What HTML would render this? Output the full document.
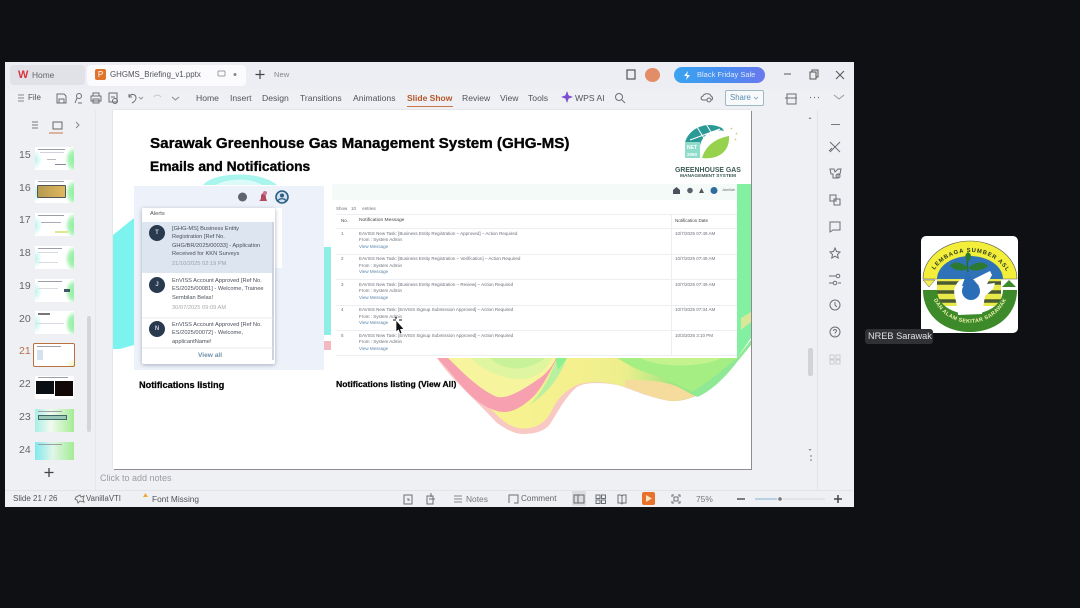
<!DOCTYPE html>
<html><head><meta charset="utf-8"><style>
html,body{margin:0;padding:0;background:#0f1013;width:1080px;height:608px;overflow:hidden}
*{box-sizing:border-box}
body{font-family:"Liberation Sans",sans-serif;position:relative}
#w{position:absolute;inset:0;filter:blur(.35px)}
#w div,#w span.a{position:absolute;white-space:nowrap}
.t{font-size:8.6px;color:#50535a;line-height:12px}
.n{font-size:10.5px;color:#666;line-height:12px;left:19px}
.th{left:35px;width:39px;height:23px;overflow:hidden;background:radial-gradient(ellipse 9px 13px at 100% 55%,#8ef0a0 0,#a8f2b4 55%,rgba(255,255,255,0) 100%),radial-gradient(ellipse 7px 10px at 0 55%,#b8f4ee 0,rgba(255,255,255,0) 100%),#fff}
.th i{position:absolute;display:block;height:1px;background:#9a9fa8}
.ln{font-size:4.5px;color:#6a6f78;line-height:6px}
.lk{font-size:4.5px;color:#5b87ab;line-height:6px}
.al{font-size:5.7px;color:#4a4f58;line-height:8.4px;left:172px}
.av{left:149px;width:16px;height:16px;border-radius:50%;background:#2a3a4e;color:#ccd;font-size:6px;font-weight:bold;text-align:center;line-height:16px}
</style></head><body><div id="w">
<!-- window -->
<div style="left:5px;top:62px;width:849px;height:445px;background:#eff0f4"></div>
<div style="left:5px;top:62px;width:849px;height:27px;background:#eceef3"></div>
<div style="left:10px;top:65px;width:75px;height:20px;background:#e1e2e8;border-radius:4px"></div>
<div style="left:87px;top:65px;width:159px;height:21px;background:#fbfbfd;border-radius:4px"></div>
<div style="left:18px;top:69px;font-size:11px;font-weight:bold;color:#d8353c;line-height:12px">W</div>
<div class="t" style="left:32px;top:69px;color:#666;font-size:8.4px">Home</div>
<div style="left:95px;top:69px;width:11px;height:11px;background:#e0742c;border-radius:2px;color:#fff;font-size:8px;line-height:11px;text-align:center">P</div>
<div class="t" style="left:110px;top:69px;font-size:7.9px">GHGMS_Briefing_v1.pptx</div>
<div class="t" style="left:274px;top:69px;font-size:7.6px;color:#888">New</div>
<div style="left:645px;top:68px;width:15px;height:14px;border-radius:50%;background:#e38c68"></div>
<div style="left:674px;top:67px;width:91px;height:16px;border-radius:8px;background:linear-gradient(90deg,#3aa3f0,#4a8cf0 60%,#6a78ee)"></div>
<div style="left:697px;top:69px;font-size:7.5px;color:#dfeaf9;line-height:12px">Black Friday Sale</div>
<div class="t" style="left:28px;top:92px;font-size:8px">File</div>
<div class="t" style="left:196px;top:92px">Home</div>
<div class="t" style="left:230px;top:92px">Insert</div>
<div class="t" style="left:262px;top:92px">Design</div>
<div class="t" style="left:300px;top:92px">Transitions</div>
<div class="t" style="left:353px;top:92px">Animations</div>
<div class="t" style="left:407px;top:92px;color:#b5562a;font-weight:bold;font-size:8.5px">Slide Show</div>
<div style="left:407px;top:106px;width:46px;height:1px;background:#c9764a"></div>
<div class="t" style="left:462px;top:92px">Review</div>
<div class="t" style="left:500px;top:92px">View</div>
<div class="t" style="left:528px;top:92px">Tools</div>
<div class="t" style="left:575px;top:92px">WPS AI</div>
<div style="left:725px;top:90px;width:39px;height:16px;border:1px solid #9fb8c8;border-radius:2px;background:#f7f9fb"></div>
<div class="t" style="left:730px;top:92px;font-size:7.8px;color:#5b8db0">Share</div>
<!-- panes -->
<div style="left:95px;top:110px;width:1px;height:380px;background:#e6e7ea"></div>
<div style="left:817px;top:110px;width:1px;height:380px;background:#e3e4e8"></div>
<div style="left:96px;top:490px;width:757px;height:1px;background:#e3e4e8"></div>
<div style="left:5px;top:490px;width:91px;height:1px;background:#e3e4e8"></div>
<div style="left:87px;top:316px;width:4px;height:116px;background:#d4d5d9;border-radius:2px"></div>
<div style="left:808px;top:348px;width:5px;height:28px;background:#d2d3d7;border-radius:2px"></div>
<div class="t" style="left:100px;top:472px;color:#9a9ca2;font-size:9px">Click to add notes</div>
<div class="t" style="left:13px;top:493px;font-size:8px">Slide 21 / 26</div>
<div class="t" style="left:86px;top:493px;font-size:7.8px">VanillaVTI</div>
<div class="t" style="left:152px;top:493px;font-size:8.3px">Font Missing</div>
<div class="t" style="left:466px;top:493px;font-size:8.4px;color:#777">Notes</div>
<div class="t" style="left:521px;top:493px;font-size:8.2px;color:#666">Comment</div>
<div style="left:572px;top:491px;width:14px;height:15px;background:#dcdde1"></div>
<div style="left:642px;top:492px;width:13px;height:13px;background:#e8722c;border-radius:2px"></div>
<div class="t" style="left:696px;top:493px;font-size:8.4px;color:#777">75%</div>

<!-- thumbnails -->
<div class="n" style="top:149px">15</div><div class="n" style="top:182px">16</div><div class="n" style="top:214px">17</div><div class="n" style="top:247px">18</div><div class="n" style="top:280px">19</div><div class="n" style="top:313px">20</div><div class="n" style="top:345px;color:#b5704a">21</div><div class="n" style="top:378px">22</div><div class="n" style="top:411px">23</div><div class="n" style="top:444px">24</div>
<div class="th" style="top:147px"><i style="left:3px;top:2px;width:27px"></i><i style="left:5px;top:5px;width:24px;background:#cfd2d8"></i><i style="left:12px;top:12px;width:9px;background:#bbb"></i><i style="left:20px;top:17px;width:11px;background:#889"></i></div>
<div class="th" style="top:180px"><i style="left:3px;top:1px;width:26px"></i><div style="left:2px;top:5px;width:29px;height:13px;background:linear-gradient(90deg,#b59a50,#e0b860);border:1px solid #555;border-radius:1px"></div></div>
<div class="th" style="top:213px"><i style="left:3px;top:2px;width:26px"></i><i style="left:6px;top:9px;width:20px;background:#aab"></i><div style="left:20px;top:18px;width:13px;height:2px;background:#dfe88e"></div></div>
<div class="th" style="top:246px"><i style="left:3px;top:2px;width:24px"></i><i style="left:3px;top:6px;width:20px;background:#d8dce2"></i><i style="left:3px;top:16px;width:20px;background:#d8dce2"></i></div>
<div class="th" style="top:279px"><i style="left:3px;top:2px;width:24px"></i><i style="left:3px;top:9px;width:20px;background:#d8dce2"></i><div style="left:29px;top:10px;width:6px;height:3px;background:#456"></div></div>
<div class="th" style="top:311px"><div style="left:3px;top:2px;width:12px;height:2px;background:#777"></div><i style="left:3px;top:12px;width:26px;background:#d8dce2"></i></div>
<div class="th" style="top:343px;left:33px;width:42px;height:24px;border:1.5px solid #b8703e;border-radius:2px;background:radial-gradient(ellipse 8px 8px at 100% 100%,#e8f4b0,rgba(255,255,255,0)),#fff"><i style="left:3px;top:2px;width:24px"></i><div style="left:3px;top:6px;width:6px;height:10px;background:#d5e2ee"></div></div>
<div class="th" style="top:376px;background:#fff"><div style="left:1px;top:5px;width:18px;height:13px;background:#0a0f14"></div><div style="left:20px;top:5px;width:18px;height:15px;background:#120808"></div><i style="left:3px;top:1px;width:30px"></i></div>
<div class="th" style="top:409px;background:linear-gradient(90deg,#a8eee6,#f2faf0 40%,#a4ec94)"><div style="left:3px;top:6px;width:29px;height:5px;background:#9cc8b8;border:1px solid #3f6a6a"></div><i style="left:3px;top:2px;width:24px"></i></div>
<div class="th" style="top:442px;height:18px;background:linear-gradient(90deg,#80e8ee,#e0f6e8 45%,#a4ec94)"><i style="left:3px;top:2px;width:24px"></i></div>

<!-- slide -->
<div style="left:113px;top:110px;width:638px;height:359px;background:#fff;box-shadow:1px 1px 0 #8d8d8d,0 0 1px #bbb"></div>
<svg style="position:absolute;left:0;top:0" width="1080" height="608" viewBox="0 0 1080 608">
<defs>
<linearGradient id="gr" x1="0" y1="0" x2="1" y2="0"><stop offset="0" stop-color="#f6f490"/><stop offset=".45" stop-color="#f4f08e"/><stop offset=".62" stop-color="#ecee8c"/><stop offset=".78" stop-color="#a0e682"/><stop offset="1" stop-color="#7ce888"/></linearGradient>
</defs>
<path d="M113 235 L134 218 L134 345 L120 349 L113 349Z" fill="#7df3f0"/>
<path d="M203 185 C215 171 262 171 277 185 L262 185 C250 178 228 178 216 185Z" fill="#a8f5ee"/>
<path d="M216 185 C228 178 250 178 262 185Z" fill="#dcfbf8"/>
<path d="M324 247 h7 v88 h-7Z" fill="#8eeee6"/><path d="M324 341 h7 v9 h-7Z" fill="#f4b8c0"/>
<path d="M737 184 h14 v130 L751 338 L737 358Z" fill="#82f0a0"/>
<path d="M741 318 L751 312 L751 322 L741 330Z" fill="#d8e898"/>
<!-- wave silhouette -->
<path d="M437 358 C450 378 473 397 497 423 C507 430 515 434 523 434 C535 434 545 431 550 424 C558 412 565 397 577 387 C585 382 600 382 617 385 C630 388 645 397 670 401 C685 402 700 396 717 383 L737 358Z" fill="#f8c8c4"/>
<path d="M445 358 C456 378 480 398 500 418 C510 427 520 430 530 428 C540 426 548 420 553 408 C559 397 568 388 580 384 C595 380 612 383 625 387 C645 394 660 400 672 401 C690 401 705 392 717 383 L737 358Z" fill="url(#gr)"/>
<path d="M625 387 C645 394 660 400 672 401 C680 401 688 399 695 396 L680 388 C665 380 640 380 625 380Z" fill="#f5dc9c"/>
<path d="M437 358 C450 370 462 390 480 403 C490 409 497 412 505 412 C517 411 525 404 533 397 C542 388 550 372 557 358Z" fill="#f7a0b0"/>
<path d="M448 358 C462 372 480 390 497 397 C510 399 525 388 540 378 C548 372 553 365 556 358Z" fill="#f6f59e"/>
<path d="M470 358 C485 372 510 383 530 378 C542 374 548 366 552 358Z" fill="#dff5a0"/>
<path d="M490 358 C505 372 528 372 545 358Z" fill="#c8f29a"/>
<path d="M557 358 L567 358 C560 375 553 388 530 405 C545 388 552 372 557 358Z" fill="#b8f0a0"/>
<path d="M556 358 L567 358 L558 370 C557 366 556 362 556 358Z" fill="#8cf090"/>
<path d="M617 358 L737 358 C725 368 705 385 692 392 C680 386 660 376 645 372 C632 368 625 362 617 358Z" fill="#a4ee84"/>
<path d="M640 358 C660 368 700 368 722 358Z" fill="#c4f28c"/>
<path d="M692 392 C705 385 725 368 737 358 L751 340 L751 345 L737 362 C725 378 710 392 697 397Z" fill="#8ee894"/>
<!-- hub logo -->
<path d="M685 143 C688 129 706 120 722 128 L724 131 C712 128 702 135 700 146 L692 150Z" fill="#2b9a96"/>
<path d="M690 140 L720 129 M697 127 L707 143 M706 124 L713 135" stroke="#fff" stroke-width="1" fill="none"/>
<path d="M702 158 C706 144 718 138 729 136 C730 150 720 160 702 158Z" fill="#96d24e"/>
<rect x="685" y="142" width="15" height="16" fill="#8fdccb"/>
<path d="M731 128l1 1M736 133l1 1M735 139l1 1" stroke="#d9c75a" stroke-width="1.500"/>
<text x="687" y="149" font-size="5" font-family="Liberation Sans" font-weight="bold" fill="#fff">NET</text>
<text x="687" y="156" font-size="4.500" font-family="Liberation Sans" font-weight="bold" fill="#fff">2050</text>
<!-- alert panel -->
<rect x="134" y="186" width="190" height="184" fill="#edf2fa"/>
<rect x="143" y="208" width="139" height="60" fill="#fff"/>
<rect x="142" y="208" width="133" height="156" rx="2" fill="#fff" style="filter:drop-shadow(0 1px 2px #aab)"/>
<rect x="142" y="222" width="131" height="51" fill="#dde6f0"/>
<rect x="272" y="222" width="2" height="138" fill="#cdd3dc"/>
<path d="M142 318H273M142 348H273" stroke="#e7e9ee" stroke-width="1"/>
<circle cx="242.500" cy="197" r="4.500" fill="#5d6470"/>
<path d="M259 201c2-1 2-3 2-5s2-3 3-3 2 2 2 5l1 3z" fill="#b4485e"/><circle cx="265" cy="193" r="2" fill="#c9768a"/>
<circle cx="282" cy="197" r="6" fill="#d4e0ea" stroke="#2a5f85" stroke-width="1.600"/><circle cx="282" cy="195.500" r="2" fill="#2a5f85"/><path d="M278 201c1-3 7-3 8 0" fill="none" stroke="#2a5f85" stroke-width="1.300"/>
<!-- table -->
<rect x="332" y="184" width="405" height="174" fill="#fff"/>
<rect x="332" y="184" width="405" height="16" fill="#f4faf7"/>
<path d="M336 214.500H737M336 228.500H737M336 254.500H737M336 279.500H737M336 305.500H737M336 330.500H737M336 355.500H737M671.500 215V355" stroke="#eceef2" stroke-width="1" fill="none"/>
<path d="M673 190l3.500-3 3.500 3v4h-7z" fill="#4a535d"/><circle cx="690" cy="190.500" r="2.800" fill="#5a6069"/><path d="M699 193l2.500-5 2.500 5z" fill="#555"/><circle cx="714" cy="190.500" r="3.500" fill="#2e6c9c"/>
<!-- cursor -->
<path d="M396 320 L396 332 L398.500 330 L400 334 L402 333 L400.500 329.500 L404 329Z" fill="#111" stroke="#fff" stroke-width=".7"/>
<path d="M393 320h3M399 320h3M396 317v2" stroke="#111" stroke-width="1"/>
<!-- toolbar icons -->
<g fill="none" stroke="#6b6e75" stroke-width="1">
<path d="M18 95h6M18 98h6M18 101h6" stroke="#888"/>
<path d="M57 94h7l2 2v7h-9zM59 99h5v4h-5z"/>
<circle cx="79" cy="96" r="2.500"/><path d="M77 98l-2 5M78 103h4"/>
<path d="M93 96v-3h6v3M91 96h10v5h-10zM93 99h6v4h-6z"/>
<path d="M109 93h8v9h-8zM111 97h4"/><circle cx="115" cy="101" r="2.500"/>
<path d="M129 97c2-4 7-3 7 1 0 2-2 4-4 5M129 94v3h3"/>
<path d="M139 97l2 2 2-2" stroke="#999"/>
<path d="M154 97c1-2 5-3 7 0" stroke="#c8c8cc"/>
<path d="M172 97l3.500 3 3.500-3" stroke="#888"/>
<circle cx="619" cy="97" r="3.500"/><path d="M622 100l3 3"/>
<path d="M703 100c-2 0-3-3 0-4 1-3 7-3 8 0 2 1 2 4 0 4z"/><circle cx="709" cy="100" r="2" fill="#eee"/>
<path d="M754 97l2 2 2-2" stroke="#8fb0c4"/>
<path d="M787 94h9v10h-9zM785 98h12" />
<path d="M810 97.500h1M814 97.500h1M818 97.500h1" stroke-width="1.200"/>
<path d="M834 95l5 4 5-4" stroke="#999"/>
<rect x="627" y="70" width="8" height="9" stroke="#555" stroke-width="1.200"/>
<path d="M784 74h7" stroke="#555"/><path d="M810 72h6v7h-6zM812 72v-2h6v7h-2" stroke="#555"/><path d="M836 71l8 8M844 71l-8 8" stroke="#555"/>
<path d="M32 122h6M32 125h6M32 128h6" stroke="#777"/><rect x="53" y="122" width="9" height="7" stroke="#666"/>
<path d="M49 133h14" stroke="#c9764a"/>
<path d="M76 122l3 3-3 3" stroke="#888"/>
<path d="M831 124.500h9" stroke="#777"/>
<path d="M830 142l10 10M840 142l-10 10M829 151l3-3"/>
<path d="M830 169h4l1 3 3-3h3l-1 5h-2v4h-5v-4h-2z"/><circle cx="838" cy="176" r="2"/>
<path d="M830 195h6v6h-6zM834 199h6v6h-6z"/>
<path d="M830 222h10v8h-7l-3 2z"/>
<path d="M835 248l1.500 3.500 3.500.500-2.500 2.500.7 3.500-3.200-1.800-3.200 1.800.7-3.500-2.500-2.500 3.500-.500z"/>
<path d="M829 276h7M838 283h3M829 283h4"/><circle cx="838" cy="276" r="1.800"/><circle cx="835" cy="283" r="1.800"/>
<circle cx="835" cy="305" r="5"/><path d="M835 302v3l2 2"/>
<circle cx="835" cy="332" r="5"/><path d="M833.500 331c0-2 3-2 3 0 0 1-1.500 1-1.500 2.500M835 335v.5"/>
<path d="M830 355h4v4h-4zM836 355h4v4h-4zM830 360h4v4h-4zM836 360h4v4h-4z" stroke="#ccc"/>
<path d="M404 495h8v9h-8zM408 498v2h2"/><path d="M427 496h6v8h-6zM431 493v4M429 499h6"/>
<path d="M454 496h8M454 499h8M454 502h8" stroke="#888"/>
<path d="M509 502v-7h9v8h-4M509 499v4" /><path d="M574 495h10v8h-10zM578 495v8" stroke="#666"/>
<path d="M596 495h4v3.500h-4zM601.500 495h4v3.500h-4zM596 500h4v3.500h-4zM601.500 500h4v3.500h-4z"/>
<path d="M618 495h3l1 1 1-1h3v8h-3l-1 1-1-1h-3zM622 496v7"/>
<path d="M672 497v-2h2M678 495h2v2M680 501v2h-2M674 503h-2v-2" /><rect x="674" y="497" width="4" height="4"/>
<path d="M737 499h8" stroke="#555" stroke-width="1.500"/><path d="M834 499h8M838 495v8" stroke="#444" stroke-width="1.500"/>
<path d="M755 499h22" stroke="#7fb0d0"/><path d="M783 499h42" stroke="#d8d9dd"/>
<path d="M76 497l4-2 1 2 3-1-1 3 1 3-4-1-2 2-1-3-2-1z" stroke="#777"/>
</g>
<circle cx="780" cy="499" r="1.800" fill="#777"/>
<path d="M646 495v7l6-3.500z" fill="#fbe3c4"/>
<rect x="218" y="71" width="7" height="5" rx="1" fill="none" stroke="#9a9ca2"/><circle cx="235" cy="74.500" r="1.500" fill="#888"/>
<path d="M260 70v9M255.500 74.500h9" stroke="#444" stroke-width="1.200"/>
<path d="M49 468v9M44.500 472.500h9" stroke="#444" stroke-width="1.300"/>
<path d="M567 91l1.600 4.400 4.400 1.600-4.400 1.600-1.600 4.400-1.600-4.400-4.400-1.600 4.400-1.600z" fill="#7d4fd0"/>
<path d="M688 71l-4 5h3l-1 4 4-5h-3z" fill="#fff"/>
<path d="M143 497l2.500-4 2.500 4z" fill="#f1a63a"/>
<path d="M810 117l1.500 2h-3z M810 451l1.500-2h-3z" fill="#888"/><path d="M810 456h2M810 460h2" stroke="#777"/>
<!-- NREB logo -->
<rect x="921" y="236" width="97" height="97" rx="5" fill="#fff"/>
<path d="M923 279 A47 38 0 0 1 1017 279Z" fill="#f2ee3a" stroke="#555" stroke-width=".6"/>
<path d="M937 279 A33 23 0 0 1 1003 279Z" fill="#2f72b8"/>
<rect x="937" y="279" width="64" height="27" fill="#e9e94a"/>
<path d="M937 283h64M937 292h64M937 301h64" stroke="#4a5a33" stroke-width="3.500"/>
<path d="M923 290 L1017 290 C1017 316 995 332 970 332 C945 332 923 316 923 290Z M937 290 C938 322 1002 322 1003 290Z" fill="#3d8a2a" fill-rule="evenodd"/>
<path d="M923 280 L935 280 L929 287Z" fill="#f3ee55" stroke="#555" stroke-width=".5"/>
<path d="M1002 287 L1009 280 L1016 287Z" fill="#3d8a2a"/>
<path d="M955 287 C958 279 965 277 970 281 L980 276 L990 271 L992 275 L987 284 L995 283 L993 289 L985 296 L982 314 L958 315 C958 303 952 293 955 287Z" fill="#fff"/>
<circle cx="971" cy="291" r="9" fill="#2b6eb8"/><path d="M967 272 L962 286 L979 286Z" fill="#2b6eb8"/>
<path d="M968 272 C967 266 967 260 968 254" stroke="#2a6a28" stroke-width="1.500" fill="none"/>
<path d="M968 268 C960 260 952 262 950 266 C955 271 964 272 968 268Z M968 268 C977 260 985 262 988 266 C983 271 973 272 968 268Z M968 262 C964 257 965 254 968 252 C972 254 972 258 968 262Z" fill="#2c7a32"/>
<path id="p1" d="M933 272 A42 38 0 0 1 1007 272" fill="none"/>
<path id="p2" d="M933 298 A40 40 0 0 0 1007 298" fill="none"/>
<text font-size="5.800" font-weight="bold" font-family="Liberation Sans" fill="#2a3a20" letter-spacing=".9"><textPath href="#p1" startOffset="3%">LEMBAGA SUMBER ASLI</textPath></text>
<text font-size="5.400" font-weight="bold" font-family="Liberation Sans" fill="#eef0a8" letter-spacing=".35"><textPath href="#p2" startOffset="2%">DAN ALAM SEKITAR SARAWAK</textPath></text>
</svg>
<div style="left:150px;top:135px;font-size:15.2px;font-weight:bold;color:#050505;line-height:18px;-webkit-text-stroke:.35px #050505">Sarawak Greenhouse Gas Management System (GHG-MS)</div>
<div style="left:150px;top:159px;font-size:13.8px;font-weight:bold;color:#050505;line-height:16px;-webkit-text-stroke:.35px #050505">Emails and Notifications</div>
<div style="left:675px;top:166px;font-size:6.9px;font-weight:bold;color:#3c5a55;line-height:9px">GREENHOUSE GAS</div>
<div style="left:680px;top:174px;font-size:4.8px;font-weight:bold;color:#3c5a55;line-height:6px">MANAGEMENT SYSTEM</div>
<div style="left:139px;top:380px;font-size:9.2px;font-weight:bold;color:#050505;line-height:11px;-webkit-text-stroke:.25px #050505">Notifications listing</div>
<div style="left:336px;top:379px;font-size:8.6px;font-weight:bold;color:#050505;line-height:11px;-webkit-text-stroke:.25px #050505">Notifications listing (View All)</div>
<!-- alerts -->
<div style="left:150px;top:211px;font-size:5.8px;color:#555;line-height:7px">Alerts</div>
<div class="av" style="top:225px">T</div><div class="av" style="top:277px">J</div><div class="av" style="top:321px">N</div>
<div class="al" style="top:225px">[GHG-MS] Business Entity<br>Registration [Ref No.<br>GHG/BR/2025/00033] - Application<br>Received for KKN Surveys</div>
<div class="al" style="top:260px;color:#9aa2ae">21/10/2025 02:19 PM</div>
<div class="al" style="top:277px">EnVISS Account Approved [Ref No.<br>ES/2025/00081] - Welcome, Trainee<br>Sembilan Belas!</div>
<div class="al" style="top:304px;color:#aaa">30/07/2025 09:09 AM</div>
<div class="al" style="top:321px">EnVISS Account Approved [Ref No.<br>ES/2025/00072] - Welcome,<br>applicantName!</div>
<div style="left:198px;top:352px;font-size:6.6px;font-weight:bold;color:#6d90ad;line-height:8px">View all</div>
<!-- table text -->
<div class="ln" style="left:336px;top:206px">Show&nbsp;&nbsp; 10 &nbsp;&nbsp;&nbsp;&nbsp;entries</div>
<div class="ln" style="left:341px;top:218px;color:#444">No.</div>
<div class="ln" style="left:359px;top:218px;color:#444;font-size:4.9px">Notification Message</div>
<div class="ln" style="left:675px;top:218px;color:#444">Notification Date</div>
<div class="ln" style="left:722px;top:187px;font-size:3.8px">Jamilah</div>
<div class="ln" style="left:341px;top:231px">1</div><div class="ln" style="left:359px;top:231px">EAVISS New Task: [Business Entity Registration – Approved] – Action Required</div><div class="ln" style="left:359px;top:237px">From : System Admin</div><div class="lk" style="left:359px;top:244px">View Message</div><div class="ln" style="left:675px;top:231px">10/7/2025 07:49 AM</div>
<div class="ln" style="left:341px;top:256px">2</div><div class="ln" style="left:359px;top:256px">EAVISS New Task: [Business Entity Registration – Verification] – Action Required</div><div class="ln" style="left:359px;top:263px">From : System Admin</div><div class="lk" style="left:359px;top:269px">View Message</div><div class="ln" style="left:675px;top:256px">10/7/2025 07:49 AM</div>
<div class="ln" style="left:341px;top:282px">3</div><div class="ln" style="left:359px;top:282px">EAVISS New Task: [Business Entity Registration – Review] – Action Required</div><div class="ln" style="left:359px;top:288px">From : System Admin</div><div class="lk" style="left:359px;top:295px">View Message</div><div class="ln" style="left:675px;top:282px">10/7/2025 07:49 AM</div>
<div class="ln" style="left:341px;top:307px">4</div><div class="ln" style="left:359px;top:307px">EAVISS New Task: [EnVISS Signup Submission Approved] – Action Required</div><div class="ln" style="left:359px;top:314px">From : System Admin</div><div class="lk" style="left:359px;top:320px">View Message</div><div class="ln" style="left:675px;top:307px">10/7/2025 07:34 AM</div>
<div class="ln" style="left:341px;top:333px">5</div><div class="ln" style="left:359px;top:333px">EAVISS New Task: [EnVISS Signup Submission Approved] – Action Required</div><div class="ln" style="left:359px;top:339px">From : System Admin</div><div class="lk" style="left:359px;top:346px">View Message</div><div class="ln" style="left:675px;top:333px">10/3/2025 3:10 PM</div>
<!-- participant label -->
<div style="left:865px;top:329px;width:68px;height:15px;background:#303134;border-radius:3px;color:#dfe0e2;font-size:9.2px;line-height:15px;padding-left:3px">NREB Sarawak</div>
</div></body></html>
